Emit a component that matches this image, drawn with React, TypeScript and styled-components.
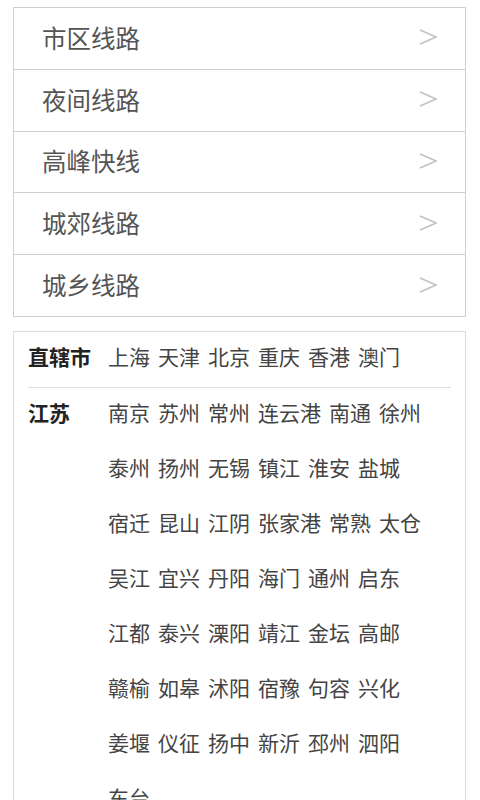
import React from 'react';
import styled, { createGlobalStyle } from 'styled-components';

const GlobalStyle = createGlobalStyle`
  body {
    margin: 0;
    background: #fff;
    font-family: "Noto Sans CJK SC", "Noto Sans", sans-serif;
  }
`;

const Page = styled.div`
  padding: 7px 14px 0 13px;
  display: flex;
  flex-direction: column;
  gap: 14px;
`;

const Menu = styled.ul`
  list-style: none;
  margin: 0;
  padding: 0;
  border: 1px solid #cfcfcf;
  border-bottom: none;
`;

const MenuRow = styled.li`
  box-sizing: border-box;
  height: 61.8px;
  display: flex;
  align-items: center;
  justify-content: space-between;
  padding: 0 28px 2px 28px;
  border-bottom: 1px solid #cfcfcf;
  font-size: 24.5px;
  color: #555;
`;

const Arrow = styled.svg`
  width: 18px;
  height: 18px;
  flex-shrink: 0;
`;

const Regions = styled.div`
  border: 1px solid #dcdcdc;
  padding: 0 14px;
`;

/* Noto CJK sits a little low in its line box, so each block is lifted 3px */
const Region = styled.div<{ $divider?: boolean }>`
  display: flex;
  margin-top: -3px;
  padding-bottom: ${(p) => (p.$divider ? '3px' : '0')};
  border-bottom: ${(p) => (p.$divider ? '1px solid #dedede' : 'none')};
`;

const RegionName = styled.div`
  width: 80px;
  flex-shrink: 0;
  font-size: 21px;
  line-height: 55px;
  font-weight: 700;
  color: #222;
`;

const Cities = styled.div`
  display: flex;
  flex-wrap: wrap;
`;

const City = styled.span`
  margin-right: 8px;
  font-size: 21px;
  line-height: 55px;
  color: #444;
`;

const routes = ['市区线路', '夜间线路', '高峰快线', '城郊线路', '城乡线路'];

const regions = [
  { name: '直辖市', cities: ['上海', '天津', '北京', '重庆', '香港', '澳门'] },
  {
    name: '江苏',
    cities: [
      '南京', '苏州', '常州', '连云港', '南通', '徐州',
      '泰州', '扬州', '无锡', '镇江', '淮安', '盐城',
      '宿迁', '昆山', '江阴', '张家港', '常熟', '太仓',
      '吴江', '宜兴', '丹阳', '海门', '通州', '启东',
      '江都', '泰兴', '溧阳', '靖江', '金坛', '高邮',
      '赣榆', '如皋', '沭阳', '宿豫', '句容', '兴化',
      '姜堰', '仪征', '扬中', '新沂', '邳州', '泗阳',
      '东台',
    ],
  },
];

function App() {
  return (
    <>
      <GlobalStyle />
      <Page>
        <Menu>
          {routes.map((r) => (
            <MenuRow key={r}>
              {r}
              <Arrow viewBox="0 0 18 18">
                <polyline
                  points="1,2 17,9 1,16"
                  fill="none"
                  stroke="#c2c2c2"
                  strokeWidth="1.6"
                />
              </Arrow>
            </MenuRow>
          ))}
        </Menu>
        <Regions>
          {regions.map((g, i) => (
            <Region key={g.name} $divider={i < regions.length - 1}>
              <RegionName>{g.name}</RegionName>
              <Cities>
                {g.cities.map((c) => (
                  <City key={c}>{c}</City>
                ))}
              </Cities>
            </Region>
          ))}
        </Regions>
      </Page>
    </>
  );
}

export default App;
